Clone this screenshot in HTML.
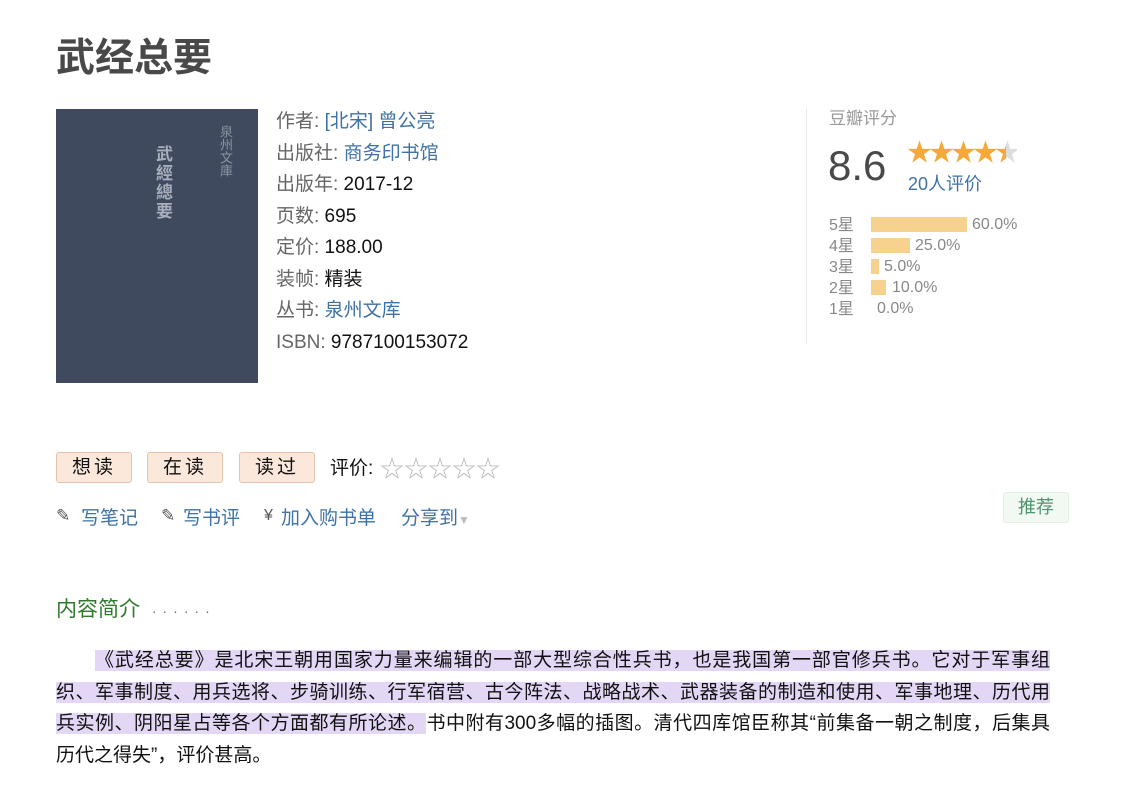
<!DOCTYPE html>
<html><head><meta charset="utf-8"><style>
body{margin:0;width:1134px;height:795px;background:#fff;font-family:"Liberation Sans","Noto Sans CJK SC",sans-serif;position:relative;overflow:hidden;color:#111}
.a{position:absolute;white-space:nowrap}
h1{position:absolute;left:56px;top:35px;margin:0;font-size:39px;font-weight:bold;color:#494949;line-height:48px}
.cover{position:absolute;left:56px;top:109px;width:202px;height:274px;background:#3f4a5e}
.info{position:absolute;left:276px;top:106px;font-size:19px;line-height:31.5px}
.info .l{color:#666}.lk{color:#3f72a5}
.bar{position:absolute;height:15px;background:#f7d28e;left:871px}
.rl{color:#888;font-size:16px}
.btn{position:absolute;top:452px;height:29px;width:74px;border:1px solid #e3c4ad;border-radius:3px;background:#fbe8db;font-size:19px;text-align:center;line-height:30px;letter-spacing:3px;color:#111}
.ln{font-size:19px;color:#3f72a5;top:503px}
.desc{position:absolute;left:56px;width:994px;font-size:19px;line-height:31.5px;top:645px;color:#111}
.desc div{text-align:justify;text-align-last:justify;height:31.5px}
.hl{background:#e4d7f6}
</style></head><body>
<h1>武经总要</h1>
<div class="cover">
<div class="a" style="left:94px;top:36px;color:#a8aebb;font-size:17px;writing-mode:vertical-rl;font-weight:bold;letter-spacing:2px">武經總要</div>
<div class="a" style="left:160px;top:16px;color:#8d94a2;font-size:13px;writing-mode:vertical-rl">泉州文庫</div>
</div>
<div class="info">
<div><span class="l">作者:</span> <span class="lk">[北宋] 曾公亮</span></div>
<div><span class="l">出版社:</span> <span class="lk">商务印书馆</span></div>
<div><span class="l">出版年:</span> 2017-12</div>
<div><span class="l">页数:</span> 695</div>
<div><span class="l">定价:</span> 188.00</div>
<div><span class="l">装帧:</span> 精装</div>
<div><span class="l">丛书:</span> <span class="lk">泉州文库</span></div>
<div><span class="l">ISBN:</span> 9787100153072</div>
</div>
<div class="a" style="left:806px;top:108px;width:1px;height:236px;background:#eaeaea"></div>
<div class="a" style="left:829px;top:104px;font-size:17px;color:#999">豆瓣评分</div>
<div class="a" style="left:828px;top:140px;font-size:42px;color:#494949;line-height:52px">8.6</div>
<div class="a" style="left:907px;top:138px;font-size:25px;color:#f4a93a;letter-spacing:-3px;line-height:30px">★★★★<span style="background:linear-gradient(90deg,#f4a93a 50%,#ddd 50%);-webkit-background-clip:text;color:transparent">★</span></div>
<div class="a lk" style="left:908px;top:170px;font-size:18px">20人评价</div>
<div class="a rl" style="left:829px;top:215px;line-height:21px">5星<br>4星<br>3星<br>2星<br>1星</div>
<div class="bar" style="top:217px;width:96px"></div><div class="a rl" style="left:972px;top:216px">60.0%</div>
<div class="bar" style="top:238px;width:39px"></div><div class="a rl" style="left:915px;top:237px">25.0%</div>
<div class="bar" style="top:259px;width:8px"></div><div class="a rl" style="left:884px;top:258px">5.0%</div>
<div class="bar" style="top:280px;width:15px"></div><div class="a rl" style="left:892px;top:279px">10.0%</div>
<div class="a rl" style="left:877px;top:300px">0.0%</div>
<div class="btn" style="left:56px">想读</div>
<div class="btn" style="left:147px">在读</div>
<div class="btn" style="left:239px">读过</div>
<div class="a" style="left:330px;top:453px;font-size:19px">评价:</div>
<div class="a" style="left:380px;top:449px;font-size:24px;color:#bbb;letter-spacing:0">☆☆☆☆☆</div>
<div class="a ln" style="left:56px;color:#555;font-size:17px;top:506px">✎</div>
<div class="a ln" style="left:81px">写笔记</div>
<div class="a ln" style="left:161px;color:#555;font-size:17px;top:506px">✎</div>
<div class="a ln" style="left:183px">写书评</div>
<div class="a ln" style="left:264px;color:#555;font-size:16px;top:507px">¥</div>
<div class="a ln" style="left:281px">加入购书单</div>
<div class="a ln" style="left:401px">分享到<span style="color:#bbb;font-size:12px">▼</span></div>
<div class="a" style="left:1003px;top:492px;width:64px;height:29px;background:#f2f8f2;border:1px solid #e3f1e3;border-radius:3px;color:#4f946e;font-size:18px;text-align:center;line-height:29px">推荐</div>
<div class="a" style="left:56px;top:593px;font-size:21px;color:#2f7a2f">内容简介 <span style="color:#666;font-size:14px;letter-spacing:6px;margin-left:6px">······</span></div>
<div class="desc">
<div><span style="padding-left:39px"></span><span class="hl">《武经总要》是北宋王朝用国家力量来编辑的一部大型综合性兵书，也是我国第一部官修兵书。它对于军事组</span></div>
<div><span class="hl">织、军事制度、用兵选将、步骑训练、行军宿营、古今阵法、战略战术、武器装备的制造和使用、军事地理、历代用</span></div>
<div><span class="hl">兵实例、阴阳星占等各个方面都有所论述。</span>书中附有300多幅的插图。清代四库馆臣称其“前集备一朝之制度，后集具</div>
<div style="text-align-last:left">历代之得失”，评价甚高。</div>
</div>
</body></html>
